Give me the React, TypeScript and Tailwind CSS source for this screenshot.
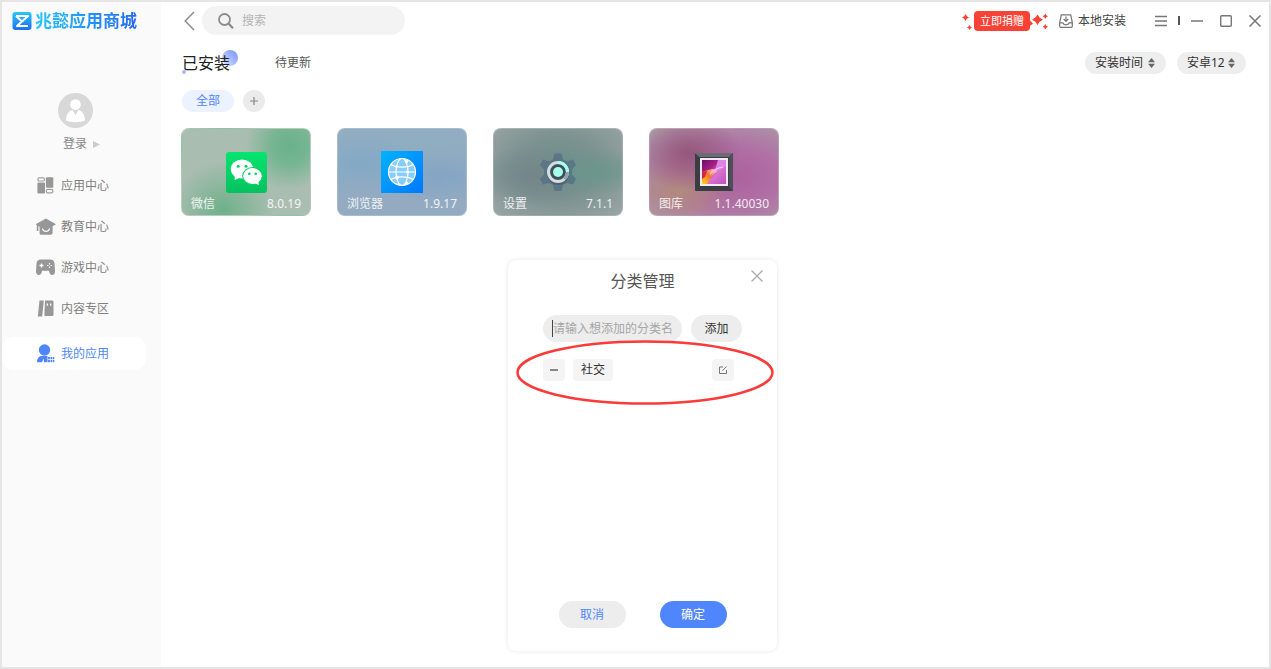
import { useState } from 'react';
import type { ReactNode } from 'react';

interface NavItem {
  label: string;
  icon: ReactNode;
  active?: boolean;
}

interface AppCard {
  name: string;
  version: string;
  background: string;
  icon: ReactNode;
}

const NAV_ITEMS: NavItem[] = [
  {
    label: '应用中心',
    icon: (
      <svg width="20" height="20" viewBox="0 0 20 20" fill="#979797">
        <rect x="2" y="1.800" width="6.400" height="3.200" rx="1" fill="none" stroke="#a0a0a0" strokeWidth="1.200" />
        <rect x="1.400" y="6.400" width="7.600" height="11" rx="1" />
        <rect x="9.900" y="1.200" width="7.400" height="10.600" rx="1" />
        <rect x="10.400" y="13.400" width="6.400" height="3.400" rx="1" fill="none" stroke="#a0a0a0" strokeWidth="1.200" />
      </svg>
    ),
  },
  {
    label: '教育中心',
    icon: (
      <svg width="20" height="20" viewBox="0 0 20 20" fill="#979797">
        <path d="M10 1.500 20 7.200l-3.400 2V16a1.800 1.800 0 0 1-1.800 1.800H5.200A1.600 1.600 0 0 1 3.600 16V9.800l-1.200-.7V14H.8V8.200L-.5 7.200z" />
        <path d="M6.600 11.800a3.500 3.400 0 0 0 6.800 0" fill="none" stroke="#fafafa" strokeWidth="1.200" strokeLinecap="round" />
      </svg>
    ),
  },
  {
    label: '游戏中心',
    icon: (
      <svg width="20" height="20" viewBox="0 0 20 20">
        <path
          d="M5 1.500h9c2.600 0 4.300 1.500 4.500 4l.5 7.700c.1 2.300-1 3.800-2.800 3.800-1.600 0-2.400-1-2.900-2.800l-.4-1.400H6.100l-.4 1.400C5.200 16 4.400 17 2.800 17 1 17-.1 15.500 0 13.200l.5-7.700c.2-2.500 1.900-4 4.500-4z"
          fill="#979797"
        />
        <path d="M5.500 5.500v4M3.500 7.500h4" stroke="#fafafa" strokeWidth="1.300" />
        <path d="M13.500 5v1.500M13.500 8.500V10M11 7.500h1.500M14.500 7.500H16" stroke="#fafafa" strokeWidth="1.200" />
      </svg>
    ),
  },
  {
    label: '内容专区',
    icon: (
      <svg width="20" height="20" viewBox="0 0 20 20" fill="#979797">
        <path d="M3.500 1.500h4.300L6.200 17.500H1.800z" />
        <path d="M9 1.500h7.300A1.200 1.200 0 0 1 17.500 2.700v13.100a1.200 1.200 0 0 1-1.200 1.200H8.400z" />
        <path d="M11.300 4.500v2.200M14.600 4.500v2.200" stroke="#fafafa" strokeWidth="1.300" />
      </svg>
    ),
  },
  {
    label: '我的应用',
    active: true,
    icon: (
      <svg width="20" height="20" viewBox="0 0 20 20" fill="#4f86fd">
        <circle cx="8.500" cy="6" r="5.700" />
        <path d="M1 18.300c0-3.500 1.800-6.200 4.800-6.200h5.700v6.200H8l-.5-3.800-1.500 3.800z" />
        <path d="M12 12.900h1.900v2.300H12zM14.500 12.900h1.700v2.300h-1.700zM16.800 12.900h1.500v2.300h-1.500zM12 15.900h1.900v2.400H12zM14.500 15.900h1.700v2.400h-1.700zM16.800 15.900h1.500v2.400h-1.500z" />
      </svg>
    ),
  },
];

const APPS: AppCard[] = [
  {
    name: '微信',
    version: '8.0.19',
    background:
      'bg-[radial-gradient(circle_at_84%_20%,#68b28a_0%,#76b592_14%,transparent_34%),radial-gradient(ellipse_at_32%_94%,#6eb189_0%,#88b69a_18%,transparent_42%),linear-gradient(#a9bdb0,#aabdb2)]',
    icon: (
      <svg width="41" height="41" viewBox="0 0 41 41">
        <defs>
          <linearGradient id="wechat" x1="0" y1="0" x2="0" y2="1">
            <stop offset="0" stopColor="#05e56f" />
            <stop offset="1" stopColor="#07c15f" />
          </linearGradient>
        </defs>
        <rect width="41" height="41" rx="3" fill="url(#wechat)" />
        <ellipse cx="16" cy="17" rx="11.200" ry="9.500" fill="#fff" />
        <path d="M8.500 22.500 8.800 28l5.500-2.500z" fill="#fff" />
        <circle cx="12.200" cy="14.200" r="1.500" fill="#08cf68" />
        <circle cx="20" cy="14.200" r="1.500" fill="#08cf68" />
        <ellipse cx="26.500" cy="24" rx="10.300" ry="8.900" fill="#07d267" />
        <ellipse cx="26.500" cy="24" rx="9.300" ry="7.900" fill="#fff" />
        <path d="M28 31l5 2-.8-4z" fill="#fff" />
        <circle cx="23.300" cy="21.800" r="1.300" fill="#07cb65" />
        <circle cx="29.700" cy="21.800" r="1.300" fill="#07cb65" />
      </svg>
    ),
  },
  {
    name: '浏览器',
    version: '1.9.17',
    background:
      'bg-[radial-gradient(ellipse_at_18%_40%,#82a9c6_0%,transparent_40%),radial-gradient(ellipse_at_80%_55%,#83a5c5_0%,transparent_42%),linear-gradient(#90adc1,#94aac1)]',
    icon: (
      <svg width="42" height="42" viewBox="0 0 42 42">
        <defs>
          <linearGradient id="browser" x1="0" y1="0" x2="1" y2="1">
            <stop offset="0" stopColor="#00b4ff" />
            <stop offset="1" stopColor="#0077ff" />
          </linearGradient>
        </defs>
        <rect width="42" height="42" fill="url(#browser)" />
        <circle cx="21" cy="21" r="13.500" fill="#86ccff" />
        <g fill="none" stroke="#fff" strokeWidth="1.200">
          <circle cx="21" cy="21" r="13.500" />
          <ellipse cx="21" cy="21" rx="6" ry="13.500" />
          <path d="M7.500 21h27M10 13.500c5 3.500 17 3.500 22 0M10 28.500c5-3.500 17-3.500 22 0" />
        </g>
        <g fill="#fff">
          <circle cx="25.500" cy="10.500" r="1.800" />
          <circle cx="15.500" cy="15.800" r="1.300" />
          <circle cx="26.500" cy="21" r="1.600" />
          <circle cx="16" cy="26.500" r="2" />
          <circle cx="25.500" cy="32" r="1.500" />
        </g>
      </svg>
    ),
  },
  {
    name: '设置',
    version: '7.1.1',
    background:
      'bg-[radial-gradient(ellipse_at_78%_50%,#6a968c_0%,transparent_38%),radial-gradient(ellipse_at_30%_55%,#748589_0%,transparent_45%),radial-gradient(ellipse_at_50%_45%,#6b8f88_0%,#7b9290_45%,#9aa5a5_100%)]',
    icon: (
      <svg width="40" height="40" viewBox="0 0 40 40">
        <path
          d="M16.500 1.500h7l1.500 6 4 2 6-2 3 5.500-4 4.500v5l4 4.500-3 5.500-6-1.500-4 2-1.500 6h-7l-1.500-6-4-2-6 1.500-3-5.500 4-4.500v-5l-4-4.500 3-5.500 6 2 4-2z"
          fill="#577285"
          opacity="0.850"
        />
        <circle cx="20" cy="22" r="11" fill="#475f6c" opacity="0.800" />
        <circle cx="20" cy="20" r="7.500" fill="#3e5059" />
        <circle cx="20" cy="20" r="9.500" fill="none" stroke="#d5dde0" strokeWidth="3" />
        <path d="M20 10.500a9.500 9.500 0 0 1 9.500 9.500" fill="none" stroke="#a7ffeb" strokeWidth="3" />
        <path d="M29.500 20a9.500 9.500 0 0 1-3.200 7" fill="none" stroke="#91a4ab" strokeWidth="3" />
        <circle cx="20" cy="20" r="5" fill="#a7ffeb" />
      </svg>
    ),
  },
  {
    name: '图库',
    version: '1.1.40030',
    background:
      'bg-[radial-gradient(ellipse_at_30%_28%,#95577a_0%,transparent_42%),radial-gradient(ellipse_at_22%_72%,#b18b7c_0%,transparent_38%),radial-gradient(ellipse_at_62%_55%,#ab609c_0%,#b070a5_45%,#aba0a8_100%)]',
    icon: (
      <svg width="38" height="38" viewBox="0 0 38 38">
        <defs>
          <linearGradient id="photo" x1="0" y1="0" x2="1" y2="1">
            <stop offset="0" stopColor="#6d0d67" />
            <stop offset="0.350" stopColor="#a81e86" />
            <stop offset="0.600" stopColor="#d872cf" />
            <stop offset="1" stopColor="#c04fc0" />
          </linearGradient>
          <linearGradient id="flame" x1="0" y1="1" x2="1" y2="0">
            <stop offset="0" stopColor="#ffd91c" />
            <stop offset="0.500" stopColor="#f5752e" />
            <stop offset="1" stopColor="#fbd0e4" />
          </linearGradient>
        </defs>
        <rect width="38" height="38" rx="1" fill="#3a3d42" />
        <path d="M0 0h38l-4 4H4z" fill="#6b6b75" />
        <path d="M38 0v38l-4-4V4z" fill="#4c4f57" />
        <rect x="5" y="5" width="28" height="28" fill="#f2eaf1" />
        <rect x="7" y="7" width="24" height="24" fill="url(#photo)" />
        <path d="M23 7h8v6L19 21z" fill="#dd84e6" />
        <path d="M7 19l6-2 5-1 4 2-5 5-5 8H7z" fill="url(#flame)" />
        <path d="M7 19l5-1-2 6-3 2z" fill="#d4254c" />
        <path d="M15 21c3-4 7-6 13-7" fill="none" stroke="#f8c5f2" strokeWidth="1.200" />
      </svg>
    ),
  },
];

function Logo() {
  return (
    <svg width="20" height="20" viewBox="0 0 20 20">
      <defs>
        <linearGradient id="logo" x1="0" y1="0" x2="0" y2="1">
          <stop offset="0" stopColor="#27c8fa" />
          <stop offset="1" stopColor="#1d6df5" />
        </linearGradient>
      </defs>
      <rect x="0.500" y="1" width="19" height="18" rx="3" fill="url(#logo)" />
      <path
        d="M4 5h12l-5.500 5L5 15h11M4 5l5.500 5"
        fill="none"
        stroke="#fff"
        strokeWidth="2"
        strokeLinejoin="round"
      />
    </svg>
  );
}

function SortArrows() {
  return (
    <svg width="7" height="10" viewBox="0 0 7 10" fill="#666" className="pointer-events-none absolute top-[6px] right-[11px]">
      <path d="M3.500 0 7 4.200H0zM3.500 10 0 5.800h7z" />
    </svg>
  );
}

function Sidebar() {
  return (
    <aside className="flex w-[159px] shrink-0 flex-col bg-[#fafafa] pt-[9px]">
      <div className="flex h-5 items-center gap-[3px] pl-[10px]">
        <Logo />
        <span className="bg-gradient-to-r from-[#2cc4fb] to-[#2668f3] bg-clip-text text-[17px] leading-5 font-bold whitespace-nowrap text-transparent">
          兆懿应用商城
        </span>
      </div>

      <div className="mt-[62px] flex flex-col items-center pr-3">
        <svg width="35" height="35" viewBox="0 0 35 35">
          <circle cx="17.500" cy="17.500" r="17.500" fill="#d8d8d8" />
          <circle cx="17.500" cy="11.500" r="5.300" fill="#fff" />
          <path d="M8 27.500c0-5.500 2.500-9.500 6.500-10.500l3 5 3-5c4 1 6.500 5 6.500 10.500-5 2.200-14 2.200-19 0z" fill="#fff" />
        </svg>
        <button className="mt-[6px] flex h-5 items-center gap-[6px] pl-3 text-xs text-[#888]">
          登录
          <svg width="7" height="7" viewBox="0 0 7 7" fill="#ccc">
            <path d="M0 0 7 3.500 0 7z" />
          </svg>
        </button>
      </div>

      <nav className="mt-[15px] flex flex-col gap-2 pr-[15px]">
        {NAV_ITEMS.map((item) => (
          <a
            key={item.label}
            href="#"
            className={`flex h-[33px] items-center gap-[5px] rounded-xl pl-[34px] text-xs ${
              item.active ? 'mt-1 bg-white text-[#4f86fd]' : 'text-[#808080]'
            }`}
          >
            {item.icon}
            {item.label}
          </a>
        ))}
      </nav>
    </aside>
  );
}

function TopBar() {
  return (
    <header className="flex h-[29px] items-center pr-2 pl-[23px]">
      <button aria-label="返回" className="mr-[7px]">
        <svg width="11" height="20" viewBox="0 0 11 20" fill="none" stroke="#8c8c8c" strokeWidth="1.500">
          <path d="M10 1 1.200 10 10 19" />
        </svg>
      </button>
      <label className="flex h-[29px] w-[203px] items-center gap-2 rounded-full bg-[#f3f3f3] pl-4">
        <svg width="16" height="16" viewBox="0 0 16 16" fill="none" stroke="#8c8c8c" strokeWidth="1.800" className="shrink-0">
          <circle cx="6.500" cy="6.500" r="5.500" />
          <path d="m10.500 10.500 4.500 4.800" strokeWidth="2.200" />
        </svg>
        <input
          type="text"
          aria-label="搜索"
          placeholder="搜索"
          className="w-full min-w-0 bg-transparent pr-4 text-xs text-[#444] outline-none placeholder:text-[#b4b4b4]"
        />
      </label>

      <div className="ml-auto flex items-center text-[#777]">
        <div className="relative flex">
          <button className="h-5 w-[56px] rounded bg-[#f94236] text-center text-[11px] leading-5 text-white">立即捐赠</button>
          <svg width="10" height="18" viewBox="0 0 10 18" fill="#f94236" className="absolute top-[1px] left-[-12px]">
            <path d="M3.500 2 4.800 4.200 7 5.500 4.800 6.800 3.500 9 2.200 6.800 0 5.500 2.200 4.200zM7.500 13l.9 1.600 1.600.9-1.600.9-.9 1.600-.9-1.600-1.600-.9 1.600-.9z" />
          </svg>
          <svg width="18" height="18" viewBox="0 0 18 18" fill="#f94236" className="absolute top-[1px] right-[-18px]">
            <path d="M7.500 2.500 9.600 5.600 13 7.700 9.600 9.800 7.500 13 5.400 9.800 2 7.700 5.400 5.600zM15.300 1.500l1 1.700 1.700 1-1.700 1-1 1.700-1-1.700-1.700-1 1.700-1zM15.300 12l1 1.700 1.700 1-1.700 1-1 1.700-1-1.700-1.700-1 1.700-1zM0 8.500 3 11.500 0 14z" />
          </svg>
        </div>
        <button className="ml-[29px] flex items-center gap-[5px] text-xs text-[#444]">
          <svg width="14" height="14" viewBox="0 0 14 14" fill="none" stroke="#777" strokeWidth="1.200">
            <path d="M2.300.8h9.400l1.600 7.500v4a1 1 0 0 1-1 1H1.700a1 1 0 0 1-1-1v-4z" />
            <path d="M.8 8.800h3c.4 1.300 1.500 2 3.200 2s2.800-.7 3.200-2h3M7 2.500v4.500M4.700 5 7 7.300 9.300 5" />
          </svg>
          本地安装
        </button>
        <button aria-label="菜单" className="ml-[29px]">
          <svg width="12" height="12" viewBox="0 0 12 12" stroke="currentColor" strokeWidth="1.300">
            <path d="M0 1.500h12M0 6h12M0 10.500h12" />
          </svg>
        </button>
        <span className="ml-[11px] h-[9px] w-[2px] bg-[#555]" />
        <button aria-label="最小化" className="ml-[11px]">
          <svg width="12" height="12" viewBox="0 0 12 12" stroke="currentColor" strokeWidth="1.500">
            <path d="M0 6h12" />
          </svg>
        </button>
        <button aria-label="最大化" className="ml-[17px]">
          <svg width="12" height="12" viewBox="0 0 12 12" fill="none" stroke="currentColor" strokeWidth="1.400">
            <rect x="0.700" y="0.700" width="10.600" height="10.600" rx="1" />
          </svg>
        </button>
        <button aria-label="关闭" className="ml-[17px]">
          <svg width="12" height="12" viewBox="0 0 12 12" stroke="currentColor" strokeWidth="1.500">
            <path d="m.5.500 11 11M11.500.500l-11 11" />
          </svg>
        </button>
      </div>
    </header>
  );
}

function CategoryDialog() {
  const [name, setName] = useState('');

  return (
    <section
      role="dialog"
      aria-labelledby="category-title"
      className="absolute top-[258px] left-[506px] flex h-[391px] w-[269px] flex-col rounded-lg bg-white px-[35px] pt-[9px] pb-[23px] shadow-[0_0_5px_rgba(0,0,0,0.1)]"
    >
      <h2 id="category-title" className="text-center text-base leading-6 text-[#555]">
        分类管理
      </h2>
      <button aria-label="关闭分类管理" className="absolute top-[10px] right-[14px]">
        <svg width="12" height="12" viewBox="0 0 12 12" stroke="#aaa" strokeWidth="1.300">
          <path d="m.5.500 11 11M11.500.500l-11 11" />
        </svg>
      </button>

      <div className="mt-[22px] flex gap-[9px]">
        <div className="relative flex-1">
          <input
            type="text"
            aria-label="分类名"
            placeholder="请输入想添加的分类名"
            value={name}
            onChange={(e) => setName(e.target.value)}
            className="h-[27px] w-full rounded-full bg-[#ededed] pl-[10px] text-xs text-[#444] outline-none placeholder:text-[#a6a6a6]"
          />
          <span className="absolute top-[5px] left-[9px] h-[17px] w-px bg-[#444]" />
        </div>
        <button className="h-[27px] w-[51px] rounded-full bg-[#ededed] text-xs text-[#333]">添加</button>
      </div>

      <div className="mt-[17px] flex items-center gap-2 pr-2">
        <button aria-label="删除" className="flex h-[22px] w-[22px] items-center justify-center rounded bg-[#f4f4f4]">
          <svg width="8" height="8" viewBox="0 0 8 8" stroke="#666" strokeWidth="1.500">
            <path d="M0 4h8" />
          </svg>
        </button>
        <span className="flex h-[22px] items-center rounded bg-[#f4f4f4] px-2 text-xs text-[#333]">社交</span>
        <button aria-label="编辑" className="ml-auto flex h-[22px] w-[22px] items-center justify-center rounded bg-[#f4f4f4]">
          <svg width="8" height="8" viewBox="0 0 8 8" fill="none" stroke="#777">
            <path d="M4 1H.5v6.500h7V4M3.500 4.700 7.500.500" />
          </svg>
        </button>
      </div>

      <svg width="260" height="68" viewBox="0 0 260 68" fill="none" className="pointer-events-none absolute top-[79px] left-[7px]">
        <ellipse cx="130" cy="33.500" rx="127.500" ry="31" stroke="#fb3a3a" strokeWidth="2.500" />
      </svg>

      <div className="mt-auto flex justify-center gap-[34px] text-xs">
        <button className="h-[27px] w-[67px] rounded-full bg-[#ededed] text-[#4f86fd]">取消</button>
        <button className="h-[27px] w-[67px] rounded-full bg-[#4f86fd] text-white">确定</button>
      </div>
    </section>
  );
}

export default function App() {
  return (
    <div className="relative flex min-h-screen border-2 border-[#e5e5e5] bg-white font-['Noto_Sans','Noto_Sans_CJK_SC',sans-serif]">
      <Sidebar />

      <main className="min-w-0 flex-1 pt-1">
        <TopBar />

        <div className="mt-[17px] flex h-[22px] items-center pr-[23px] pl-[21px]">
          <button className="relative isolate text-base leading-5 text-[#222]">
            <span className="absolute top-[-3px] left-10 -z-10 h-4 w-4 rounded-full bg-gradient-to-bl from-[#758efb] to-[#dfe6ff]" />
            <span className="absolute top-[17px] left-0 -z-10 h-1 w-1 rounded-full bg-[#a9b8ff]" />
            已安装
          </button>
          <button className="ml-[45px] text-xs text-[#555]">待更新</button>

          <div className="ml-auto flex gap-[11px] text-xs text-[#333]">
            <div className="relative">
              <select aria-label="排序" className="h-[22px] w-[81px] appearance-none rounded-full bg-[#eee] pl-[10px] outline-none">
                <option>安装时间</option>
              </select>
              <SortArrows />
            </div>
            <div className="relative">
              <select aria-label="系统版本" className="h-[22px] w-[69px] appearance-none rounded-full bg-[#eee] pl-[10px] outline-none">
                <option>安卓12</option>
              </select>
              <SortArrows />
            </div>
          </div>
        </div>

        <div className="mt-4 flex items-center gap-[9px] pl-[21px]">
          <button className="h-[22px] w-[52px] rounded-full bg-[#ecf2ff] text-xs text-[#4f86fd]">全部</button>
          <button aria-label="添加分类" className="flex h-[22px] w-[22px] items-center justify-center rounded-full bg-[#ebebeb]">
            <svg width="8" height="8" viewBox="0 0 8 8" stroke="#888" strokeWidth="1.200">
              <path d="M0 4h8M4 0v8" />
            </svg>
          </button>
        </div>

        <div className="mt-4 flex flex-wrap gap-[26px] pl-5">
          {APPS.map((app) => (
            <article
              key={app.name}
              className={`relative flex h-[88px] w-[130px] items-center justify-center rounded-lg border border-white/20 ${app.background}`}
            >
              {app.icon}
              <div className="absolute inset-x-[9px] bottom-[3px] flex justify-between text-xs leading-4 text-white/85">
                <span>{app.name}</span>
                <span>{app.version}</span>
              </div>
            </article>
          ))}
        </div>
      </main>

      <CategoryDialog />
    </div>
  );
}
